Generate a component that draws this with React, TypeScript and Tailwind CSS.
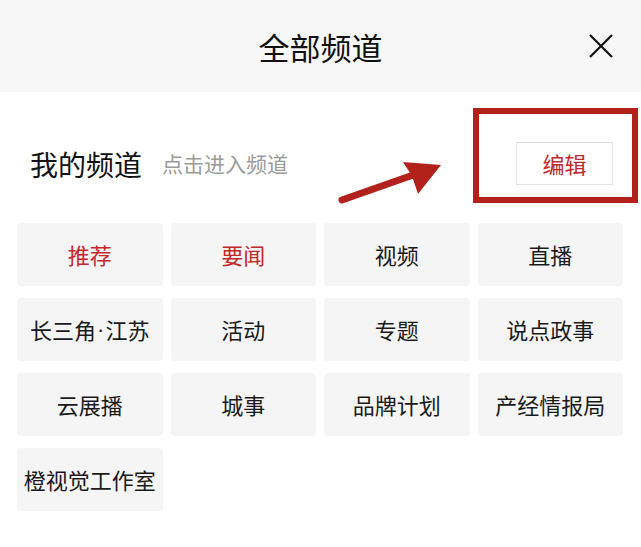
const channels = [
  { name: "推荐", active: true },
  { name: "要闻", active: true },
  { name: "视频" },
  { name: "直播" },
  { name: "长三角·江苏" },
  { name: "活动" },
  { name: "专题" },
  { name: "说点政事" },
  { name: "云展播" },
  { name: "城事" },
  { name: "品牌计划" },
  { name: "产经情报局" },
  { name: "橙视觉工作室" },
];

// 中点用西文字体, 避免全角宽度
function ChannelName({ name }: { name: string }) {
  const parts = name.split("·");
  if (parts.length === 1) return <>{name}</>;
  return (
    <>
      {parts[0]}
      <span className="mx-[1px] font-['Liberation_Sans']">·</span>
      {parts[1]}
    </>
  );
}

export default function App() {
  return (
    <div
      className="relative h-[547px] w-[641px] overflow-hidden bg-white"
      style={{ fontFamily: '"Noto Sans CJK SC", "Noto Sans", sans-serif' }}
    >
      {/* 顶部标题 */}
      <div className="grid h-[92px] grid-cols-[1fr_auto_1fr] items-center bg-[#f7f7f7]">
        <div />
        <h1 className="text-[31px] leading-none font-normal text-[#111]">全部频道</h1>
        <div className="flex justify-end pr-[27px]">
          <svg width="26" height="26" viewBox="0 0 26 26" className="text-[#111]">
            <path d="M2 2 L24 24 M24 2 L2 24" stroke="currentColor" strokeWidth="2.2" />
          </svg>
        </div>
      </div>

      {/* 我的频道 */}
      <div className="flex h-[131px] items-center pt-[12px] pr-[28px] pl-[30px]">
        <span className="text-[28px] leading-none text-[#111]">我的频道</span>
        <span className="ml-[20px] text-[21px] leading-none text-[#9a9a9a]">点击进入频道</span>
        <button className="ml-auto flex h-[43px] w-[97px] items-center justify-center border border-[#e3e3e3] bg-white text-[22px] text-[#c4282a]">
          编辑
        </button>
      </div>

      {/* 频道列表 */}
      <div className="grid grid-cols-4 gap-x-2 gap-y-3 pr-[18px] pl-[17px]">
        {channels.map((c) => (
          <div
            key={c.name}
            className={
              "flex h-[63px] items-center justify-center rounded-[4px] bg-[#f5f5f5] text-[22px] whitespace-nowrap " +
              (c.active ? "text-[#c4282a]" : "text-[#1a1a1a]")
            }
          >
            <ChannelName name={c.name} />
          </div>
        ))}
      </div>

      {/* 标注 */}
      <div className="pointer-events-none absolute top-[108px] left-[473px] h-[95px] w-[165px] border-[6px] border-[#b3211c]" />
      <svg
        className="pointer-events-none absolute top-[140px] left-[330px]"
        width="130"
        height="70"
        viewBox="0 0 130 70"
      >
        <line x1="12" y1="60" x2="86" y2="34" stroke="#b3211c" strokeWidth="7" strokeLinecap="round" />
        <polygon points="111,25 73,22 82,36 88,54" fill="#b3211c" />
      </svg>
    </div>
  );
}
